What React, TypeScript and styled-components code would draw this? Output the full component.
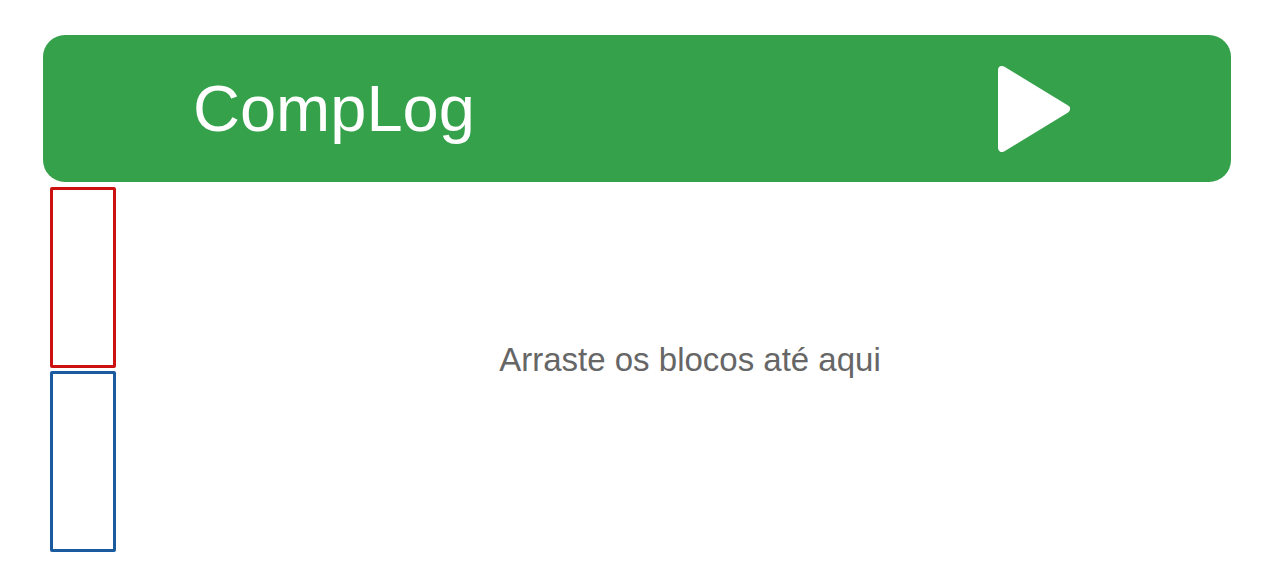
import React from "react";
import styled, { createGlobalStyle } from "styled-components";

const GlobalStyle = createGlobalStyle`
  html, body {
    margin: 0;
    padding: 0;
    background: #ffffff;
    font-family: "Liberation Sans", Arial, sans-serif;
  }
`;

const Page = styled.div`
  display: flex;
  flex-direction: column;
  width: 1274px;
  height: 586px;
  padding-top: 35px;
  box-sizing: border-box;
`;

const Header = styled.header`
  display: flex;
  align-items: center;
  justify-content: space-between;
  margin: 0 43px;
  height: 147px;
  padding: 0 161px 0 150px;
  border-radius: 22px;
  background: #35a14a;
  box-sizing: border-box;
`;

const Title = styled.h1`
  margin: 0;
  font-size: 65px;
  font-weight: 400;
  color: #ffffff;
  line-height: 1;
`;

const PlayButton = styled.button`
  display: flex;
  padding: 0;
  border: none;
  background: none;
  cursor: pointer;
`;

const Workspace = styled.div`
  display: flex;
  gap: 4px;
  padding: 5px 14px 0 50px;
`;

const Palette = styled.div`
  display: flex;
  flex-direction: column;
  gap: 3px;
`;

const Block = styled.div<{ $color: string }>`
  width: 66px;
  height: 181px;
  border: 3px solid ${(p) => p.$color};
  border-radius: 2px;
  box-sizing: border-box;
`;

const DropZone = styled.div`
  flex: 1;
  display: flex;
  align-items: center;
  justify-content: center;
  padding-bottom: 20px;
`;

const Hint = styled.span`
  font-size: 33px;
  color: #666666;
`;

export default function App() {
  return (
    <>
      <GlobalStyle />
      <Page>
        <Header>
          <Title>CompLog</Title>
          <PlayButton aria-label="Executar">
            <svg width="72" height="86" viewBox="0 0 72 86">
              <polygon
                points="4,4 68,43 4,82"
                fill="#ffffff"
                stroke="#ffffff"
                strokeWidth="8"
                strokeLinejoin="round"
              />
            </svg>
          </PlayButton>
        </Header>
        <Workspace>
          <Palette>
            <Block $color="#cc1111" />
            <Block $color="#1a5a9e" />
          </Palette>
          <DropZone>
            <Hint>Arraste os blocos até aqui</Hint>
          </DropZone>
        </Workspace>
      </Page>
    </>
  );
}
